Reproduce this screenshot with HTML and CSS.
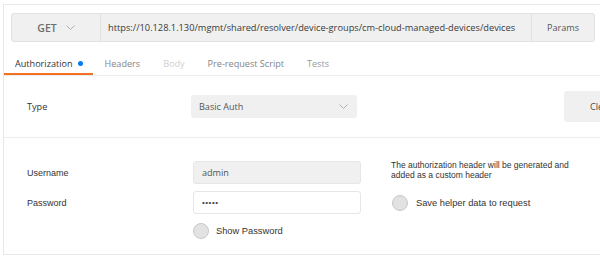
FILE: index.html
```html
<!DOCTYPE html>
<html>
<head>
<meta charset="utf-8">
<link rel="stylesheet" href="styles.css">
</head>
<body>
<div class="panel">
  <div class="request-bar">
    <div class="method">
      <span class="method-name">GET</span>
      <svg class="chev" width="9" height="5" viewBox="0 0 9 5"><polyline points="0.5,0.5 4.5,4.5 8.5,0.5" fill="none" stroke="#b0b0b0" stroke-width="1"/></svg>
    </div>
    <div class="url">https://10.128.1.130/mgmt/shared/resolver/device-groups/cm-cloud-managed-devices/devices</div>
    <div class="params">Params</div>
  </div>
  <div class="tabs">
    <div class="tab active">Authorization<span class="dot"></span></div>
    <div class="tab">Headers</div>
    <div class="tab disabled">Body</div>
    <div class="tab">Pre-request Script</div>
    <div class="tab muted">Tests</div>
  </div>
  <div class="type-row">
    <div class="type-label">Type</div>
    <div class="select">
      <span>Basic Auth</span>
      <svg class="chev" width="9" height="5" viewBox="0 0 9 5"><polyline points="0.5,0.5 4.5,4.5 8.5,0.5" fill="none" stroke="#b0b0b0" stroke-width="1"/></svg>
    </div>
    <div class="clear-btn">Clear</div>
  </div>
  <div class="creds">
    <div class="form">
      <div class="label">Username</div>
      <div class="input filled">admin</div>
      <div class="label">Password</div>
      <div class="input pass">•••••</div>
      <div class="check show">
        <span class="radio"></span><span>Show Password</span>
      </div>
    </div>
    <div class="helper">
      <div class="hint">The authorization header will be generated and<br>added as a custom header</div>
      <div class="check save">
        <span class="radio"></span><span>Save helper data to request</span>
      </div>
    </div>
  </div>
</div>
</body>
</html>
```
FILE: styles.css
```css
html, body {
  margin: 0;
  padding: 0;
  background: #ffffff;
  overflow: hidden;
  width: 600px;
  height: 261px;
}

.panel {
  margin: 4px 0 0 3px;
  width: 620px;
  height: 249px;
  border: 1px solid #e8e8e8;
  border-right: none;
  font-family: "Open Sans", sans-serif;
  font-size: 9.1px;
  color: #333333;
}

.request-bar {
  display: flex;
  margin: 8px 0 0 7px;
  width: 582px;
  height: 27px;
  border: 1px solid #e2e2e2;
  border-radius: 3px;
  background: #f0f0f0;
}

.method {
  width: 88px;
  flex-shrink: 0;
  display: flex;
  align-items: center;
  justify-content: center;
  gap: 9px;
  border-right: 1px solid #e0e0e0;
}

.method-name {
  font-size: 10.5px;
  font-weight: 600;
  color: #6e6e6e;
}

.chev {
  display: block;
}

.url {
  flex: 1;
  display: flex;
  align-items: center;
  padding-left: 7px;
  font-size: 9.25px;
  color: #3a3a3a;
  white-space: nowrap;
  overflow: hidden;
}

.params {
  width: 62px;
  flex-shrink: 0;
  display: flex;
  align-items: center;
  justify-content: center;
  border-left: 1px solid #e0e0e0;
  color: #555555;
}

.tabs {
  display: flex;
  border-bottom: 1px solid #ececec;
}

.tab {
  display: flex;
  align-items: center;
  height: 12px;
  padding: 15px 11.5px 4px;
  border-bottom: 2px solid transparent;
  font-size: 9.1px;
  color: #858585;
  white-space: nowrap;
}

.tab.active {
  padding-left: 11px;
  padding-right: 10.5px;
  color: #333333;
  border-bottom-color: #f47023;
}

.tab.disabled {
  color: #cfcfcf;
}

.tab.muted {
  color: #9a9a9a;
}

.dot {
  width: 5px;
  height: 5px;
  margin-left: 5px;
  border-radius: 50%;
  background: #097bed;
}

.type-row {
  display: flex;
  align-items: center;
  height: 61px;
  padding-left: 23px;
  border-bottom: 1px solid #ececec;
}

.type-label {
  flex-shrink: 0;
  width: 164px;
  color: #333333;
}

.select {
  flex-shrink: 0;
  width: 166px;
  height: 23px;
  box-sizing: border-box;
  display: flex;
  align-items: center;
  justify-content: space-between;
  padding: 0 9px 0 8px;
  border-radius: 3px;
  background: #f0f0f0;
  color: #555555;
}

.clear-btn {
  flex-shrink: 0;
  margin-left: 207px;
  width: 56px;
  height: 31px;
  box-sizing: border-box;
  display: flex;
  align-items: center;
  padding-left: 26px;
  border-radius: 3px;
  background: #f0f0f0;
  color: #444444;
  overflow: hidden;
  white-space: nowrap;
}

.creds {
  display: flex;
  align-items: flex-start;
  padding: 23px 0 0 23px;
}

.form {
  display: grid;
  grid-template-columns: 166px 168px;
  grid-auto-rows: 23px;
  row-gap: 7px;
  align-items: center;
}

.label {
  font-family: "Liberation Sans", Arial, sans-serif;
  font-size: 9px;
  color: #333333;
}

.input {
  height: 23px;
  box-sizing: border-box;
  display: flex;
  align-items: center;
  padding-left: 8px;
  border-radius: 3px;
  border: 1px solid #e6e6e6;
  color: #555555;
}

.input.filled {
  background: #f0f0f0;
}

.input.pass {
  background: #ffffff;
  font-family: "Liberation Sans", Arial, sans-serif;
  font-size: 8px;
  letter-spacing: 0.5px;
  color: #444444;
}

.check {
  display: flex;
  align-items: center;
  height: 18px;
  font-family: "Liberation Sans", Arial, sans-serif;
  font-size: 9.3px;
  color: #333333;
  white-space: nowrap;
}

.check.show {
  grid-column: 2;
  margin-top: -3px;
}

.radio {
  width: 16px;
  height: 16px;
  box-sizing: border-box;
  margin-right: 7px;
  border-radius: 50%;
  border: 1px solid #c8c8c8;
  background: #e2e2e2;
}

.helper {
  margin-left: 30px;
  margin-top: -1px;
}

.hint {
  font-family: "Liberation Sans", Arial, sans-serif;
  font-size: 8.5px;
  line-height: 10px;
  color: #333333;
  white-space: nowrap;
}

.check.save {
  margin-top: 14px;
  margin-left: 1px;
}

.check.save .radio {
  margin-right: 8px;
}
```
